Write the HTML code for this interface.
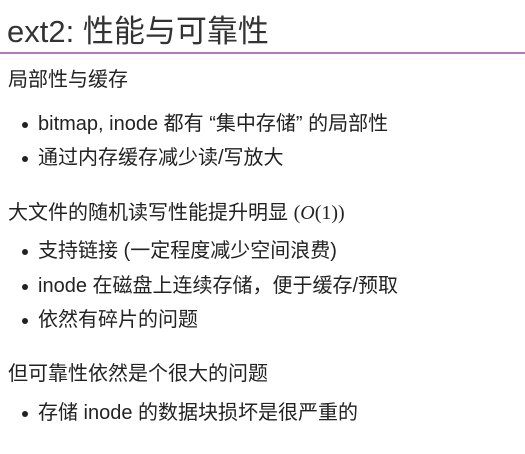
<!DOCTYPE html>
<html><head><meta charset="utf-8"><style>
body{margin:0;width:525px;height:454px;background:#fff;overflow:hidden;position:relative;font-family:"Liberation Sans","Noto Sans CJK SC",sans-serif;color:#222}
.t{position:absolute;left:7px;top:12px;font-size:31px;line-height:40px;color:#333;white-space:nowrap}
.hr{position:absolute;left:0;top:52px;width:525px;height:2px;background:#b37bb5}
.l{position:absolute;left:8px;font-size:20px;line-height:24px;white-space:nowrap;transform:translateY(-10px)}
.b{left:38px}
.b:before{content:"";position:absolute;left:-16px;top:10px;width:6px;height:6px;border-radius:50%;background:#222}
</style></head><body>
<div class="t">ext2: 性能与可靠性</div>
<div class="hr"></div>
<div class="l" style="top:78px">局部性与缓存</div>
<div class="l b" style="top:122px">bitmap, inode 都有 “集中存储” 的局部性</div>
<div class="l b" style="top:156px">通过内存缓存减少读/写放大</div>
<div class="l" style="top:211px">大文件的随机读写性能提升明显 <span style="font-family:'Liberation Serif',serif">(<i>O</i>(1))</span></div>
<div class="l b" style="top:249px">支持链接 (一定程度减少空间浪费)</div>
<div class="l b" style="top:284px">inode 在磁盘上连续存储，便于缓存/预取</div>
<div class="l b" style="top:318px">依然有碎片的问题</div>
<div class="l" style="top:372px">但可靠性依然是个很大的问题</div>
<div class="l b" style="top:411px">存储 inode 的数据块损坏是很严重的</div>
</body></html>
